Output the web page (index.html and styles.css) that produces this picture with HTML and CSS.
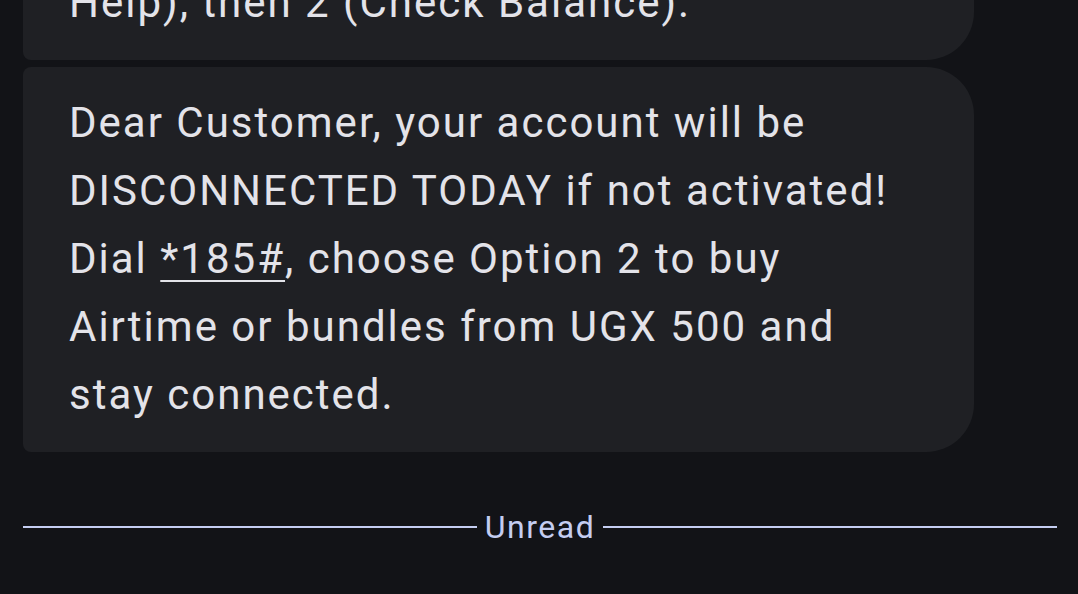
FILE: index.html
```html
<!DOCTYPE html>
<html lang="en">
<head>
    <meta charset="UTF-8">
    <meta name="viewport" content="width=device-width, initial-scale=1.0">
    <title>Messages</title>
    <link rel="stylesheet" href="styles.css">
</head>
<body>
    <main class="thread">
        <!-- Earlier message, scrolled mostly out of view -->
        <div class="bubble">
            To check your balance at any time, dial *185# and choose 6 (Self<br>Help), then 2 (Check Balance).
        </div>

        <div class="bubble">
            Dear Customer, your account will be DISCONNECTED TODAY if not activated! Dial <a href="#" class="ussd">*185#</a>, choose Option 2 to buy Airtime or bundles from UGX 500 and stay connected.
        </div>

        <!-- Unread divider -->
        <div class="divider">
            <span class="divider-line"></span>
            <span class="divider-label">Unread</span>
            <span class="divider-line"></span>
        </div>
    </main>
</body>
</html>
```

FILE: styles.css
```css
/* General Styles */
body {
    font-family: Roboto, 'Noto Sans', sans-serif;
    margin: 0;
    padding: 0;
    background: #121317;
    color: #e3e3e9;
    overflow: hidden;
}

.thread {
    height: 100vh;
    display: flex;
    flex-direction: column;
    justify-content: flex-end;
    gap: 7px;
    padding: 0 21px 0 23px;
    box-sizing: border-box;
    overflow: hidden;
}

.bubble {
    flex-shrink: 0;
    width: 951px;
    box-sizing: border-box;
    padding: 22px 60px 23px 46px;
    background: #1f2024;
    border-radius: 8px 48px 48px 8px;
    font-size: 42px;
    line-height: 68px;
    letter-spacing: 2px;
}

.ussd {
    color: inherit;
    text-decoration: underline;
    text-decoration-thickness: 2px;
    text-underline-offset: 7px;
}

/* Unread divider */
.divider {
    flex-shrink: 0;
    display: flex;
    align-items: center;
    gap: 8px;
    height: 40px;
    margin: 48px 0 47px 0;
    color: #c4cdf1;
}

.divider-line {
    flex: 1;
    height: 2px;
    background: #c4cdf1;
}

.divider-label {
    font-size: 32px;
    line-height: 40px;
    letter-spacing: 1.5px;
}
```
